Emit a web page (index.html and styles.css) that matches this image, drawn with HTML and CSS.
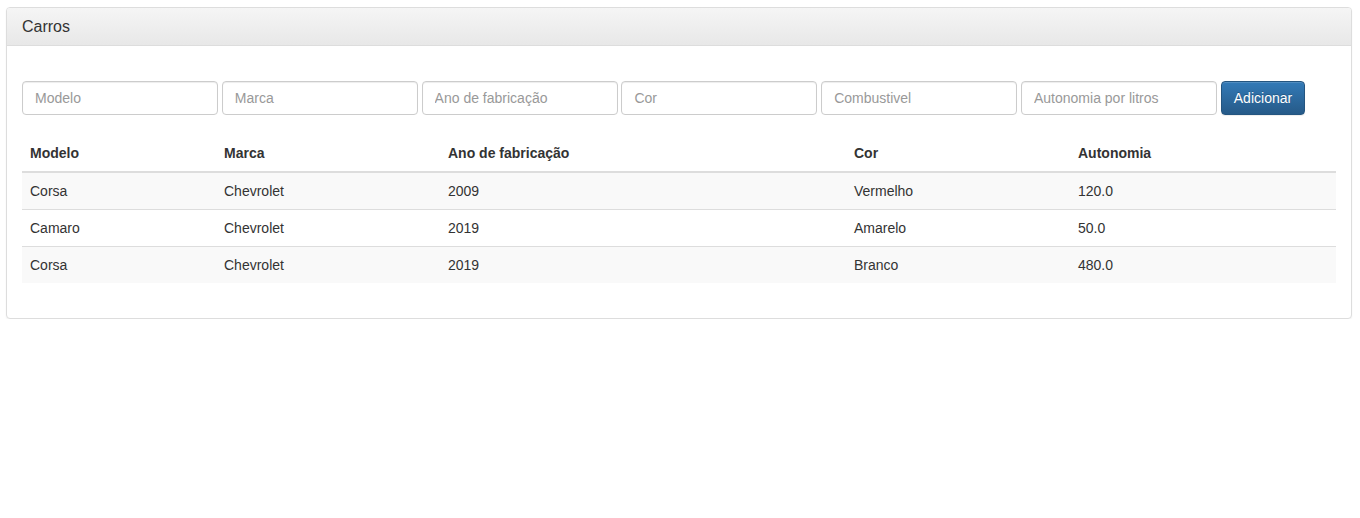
FILE: index.html
```html
<!DOCTYPE html>
<html lang="pt">
<head>
<meta charset="utf-8">
<title>Carros</title>
<link rel="stylesheet" href="styles.css">
</head>
<body>
<div class="panel">
  <div class="panel-heading">Carros</div>
  <div class="panel-body">
    <form class="form-inline">
      <input class="form-control" type="text" placeholder="Modelo">
      <input class="form-control" type="text" placeholder="Marca">
      <input class="form-control" type="text" placeholder="Ano de fabricação">
      <input class="form-control" type="text" placeholder="Cor">
      <input class="form-control" type="text" placeholder="Combustivel">
      <input class="form-control" type="text" placeholder="Autonomia por litros">
      <button class="btn-primary" type="button">Adicionar</button>
    </form>
    <table class="table">
      <thead>
        <tr>
          <th class="c1">Modelo</th>
          <th class="c2">Marca</th>
          <th class="c3">Ano de fabricação</th>
          <th class="c4">Cor</th>
          <th>Autonomia</th>
        </tr>
      </thead>
      <tbody>
        <tr><td>Corsa</td><td>Chevrolet</td><td>2009</td><td>Vermelho</td><td>120.0</td></tr>
        <tr><td>Camaro</td><td>Chevrolet</td><td>2019</td><td>Amarelo</td><td>50.0</td></tr>
        <tr><td>Corsa</td><td>Chevrolet</td><td>2019</td><td>Branco</td><td>480.0</td></tr>
      </tbody>
    </table>
  </div>
</div>
</body>
</html>
```
FILE: styles.css
```css
* { box-sizing: border-box; }
html, body { margin: 0; padding: 0; background: #fff; }
body {
  padding: 7px 8px 0 6px;
  font-family: "Liberation Sans", Arial, Helvetica, sans-serif;
  font-size: 14px;
  line-height: 20px;
  color: #333;
}
.panel {
  border: 1px solid #ddd;
  border-radius: 4px;
  background: #fff;
  box-shadow: 0 1px 2px rgba(0,0,0,.05);
}
.panel-heading {
  padding: 10px 15px;
  font-size: 16px;
  line-height: 17px;
  color: #333;
  background-image: linear-gradient(to bottom, #f5f5f5 0, #e8e8e8 100%);
  border-bottom: 1px solid #ddd;
  border-radius: 3px 3px 0 0;
}
.panel-body {
  padding: 35px 15px 15px 15px;
}
.form-inline {
  display: flex;
  gap: 3.8px;
  align-items: center;
  margin: 0;
}
.form-control {
  width: 196px;
  height: 34px;
  padding: 6px 12px;
  font-family: inherit;
  font-size: 14px;
  line-height: 20px;
  color: #555;
  background: #fff;
  border: 1px solid #ccc;
  border-radius: 4px;
  box-shadow: inset 0 1px 1px rgba(0,0,0,.075);
  outline: none;
  margin: 0;
}
.form-control::placeholder { color: #999; opacity: 1; }
.btn-primary {
  height: 34px;
  padding: 6px 12px;
  font-family: inherit;
  font-size: 14px;
  line-height: 20px;
  color: #fff;
  border: 1px solid #245580;
  border-radius: 4px;
  background-image: linear-gradient(to bottom, #337ab7 0, #265a88 100%);
  text-shadow: 0 -1px 0 rgba(0,0,0,.2);
  box-shadow: inset 0 1px 0 rgba(255,255,255,.15), 0 1px 1px rgba(0,0,0,.075);
  margin: 0;
  cursor: pointer;
}
.table {
  width: 100%;
  border-collapse: collapse;
  border-spacing: 0;
  margin: 20px 0 20px 0;
}
.table th, .table td {
  padding: 8px;
  line-height: 20px;
  text-align: left;
  vertical-align: top;
}
.table th {
  font-weight: bold;
  vertical-align: bottom;
  border-bottom: 2px solid #ddd;
}
.table td { border-top: 1px solid #ddd; }
.table tbody tr:first-child td { border-top: 0; }
.table tbody tr:nth-child(odd) { background: #f9f9f9; }
.c1 { width: 194px; }
.c2 { width: 224px; }
.c3 { width: 406px; }
.c4 { width: 224px; }
```
